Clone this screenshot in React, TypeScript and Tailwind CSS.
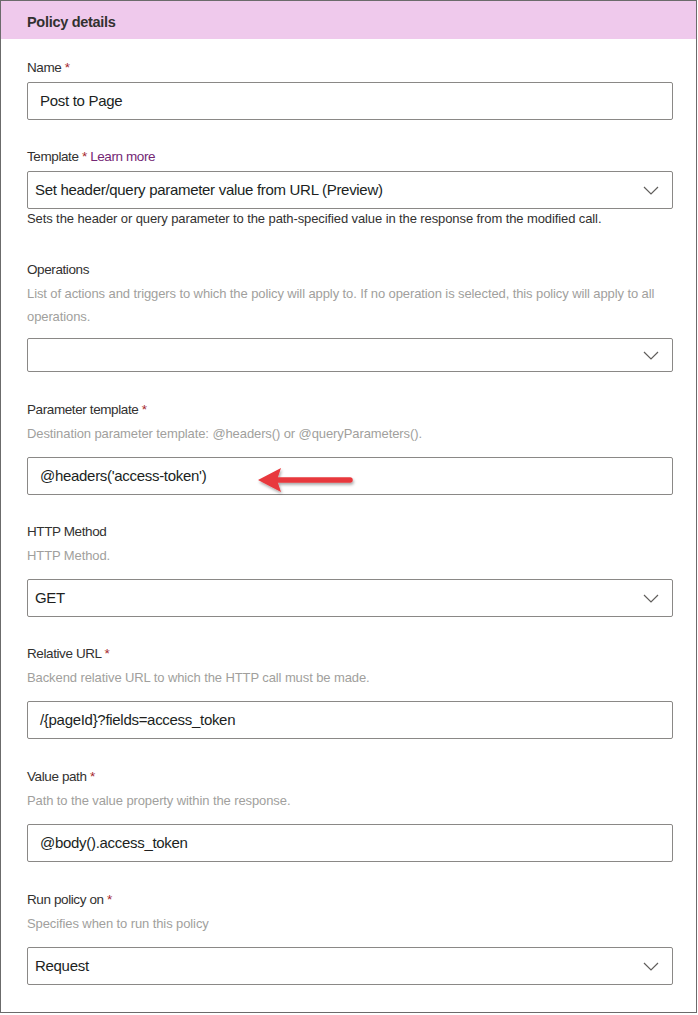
import React from "react";

const font = { fontFamily: "'Liberation Sans', Arial, sans-serif" };

function Chevron() {
  return (
    <svg width="16" height="9" viewBox="0 0 16 9" className="shrink-0">
      <path d="M1 1 L8 8 L15 1" fill="none" stroke="#605e5c" strokeWidth="1.2" />
    </svg>
  );
}

function Label({ text, required, extra }: { text: string; required?: boolean; extra?: React.ReactNode }) {
  return (
    <div className="text-[13.5px] leading-[20px] text-[#323130] tracking-[-0.4px]">
      {text}
      {required && <span className="text-[#a4262c]"> *</span>}
      {extra}
    </div>
  );
}

function Desc({ children }: { children: React.ReactNode }) {
  return <div className="mt-[2px] text-[13px] leading-[23px] tracking-[-0.1px] text-[#a19f9d]">{children}</div>;
}

function TextBox({ value, mt = "mt-[12px]", children }: { value: string; mt?: string; children?: React.ReactNode }) {
  return (
    <div
      className={
        mt + " h-[38px] border border-[#8a8886] rounded-[2px] flex items-center pl-[12px] text-[15px] text-[#201f1e] tracking-[-0.3px]"
      }
    >
      <span>{value}</span>
      {children}
    </div>
  );
}

function Select({ value, h = "h-[38px]", mt = "mt-[12px]" }: { value: string; h?: string; mt?: string }) {
  return (
    <div
      className={
        mt + " " + h + " border border-[#8a8886] rounded-[2px] flex items-center justify-between pl-[7px] pr-[13px] text-[15px] text-[#201f1e] tracking-[-0.3px]"
      }
    >
      <span>{value}</span>
      <Chevron />
    </div>
  );
}

function Arrow() {
  return (
    <svg width="110" height="36" viewBox="0 0 110 36" className="ml-[48px] mt-[12px]">
      <defs>
        <filter id="sh" x="-20%" y="-50%" width="140%" height="200%">
          <feDropShadow dx="1" dy="2" stdDeviation="1.5" floodColor="#000" floodOpacity="0.35" />
        </filter>
      </defs>
      <g filter="url(#sh)">
        <line x1="20" y1="16" x2="96" y2="16" stroke="#e8383d" strokeWidth="5.5" strokeLinecap="round" />
        <path d="M4 16 L27 4 L23 16 L27 28 Z" fill="#e8383d" />
      </g>
    </svg>
  );
}

export default function App() {
  return (
    <div style={font} className="w-[697px] h-[1013px] border border-[#6b6b6b] bg-white">
      <div className="h-[38px] bg-[#efc9ec] flex items-center px-[26px] pt-[5px]">
        <span className="text-[14.5px] font-semibold text-[#323130] tracking-[-0.3px]">Policy details</span>
      </div>
      <div className="pl-[26px] pr-[23px] pt-[19px] flex flex-col gap-[27px]">
        <div>
          <Label text="Name" required />
          <TextBox value="Post to Page" mt="mt-[4px]" />
        </div>
        <div>
          <Label text="Template" required extra={<span className="text-[#742774]"> Learn more</span>} />
          <Select value="Set header/query parameter value from URL (Preview)" mt="mt-[4px]" />
          <div className="mt-[1px] text-[13px] leading-[18px] text-[#323130] tracking-[-0.1px]">
            Sets the header or query parameter to the path-specified value in the response from the modified call.
          </div>
        </div>
        <div className="mt-[5px]">
          <Label text="Operations" />
          <Desc>
            List of actions and triggers to which the policy will apply to. If no operation is selected, this policy will apply to all
            operations.
          </Desc>
          <Select value="" h="h-[34px]" mt="mt-[10px]" />
        </div>
        <div className="mt-[1px]">
          <Label text="Parameter template" required />
          <Desc>Destination parameter template: @headers() or @queryParameters().</Desc>
          <TextBox value="@headers('access-token')">
            <Arrow />
          </TextBox>
        </div>
        <div>
          <Label text="HTTP Method" />
          <Desc>HTTP Method.</Desc>
          <Select value="GET" />
        </div>
        <div>
          <Label text="Relative URL" required />
          <Desc>Backend relative URL to which the HTTP call must be made.</Desc>
          <TextBox value="/{pageId}?fields=access_token" />
        </div>
        <div className="mt-[1px]">
          <Label text="Value path" required />
          <Desc>Path to the value property within the response.</Desc>
          <TextBox value="@body().access_token" />
        </div>
        <div className="mt-[1px]">
          <Label text="Run policy on" required />
          <Desc>Specifies when to run this policy</Desc>
          <Select value="Request" />
        </div>
      </div>
    </div>
  );
}
